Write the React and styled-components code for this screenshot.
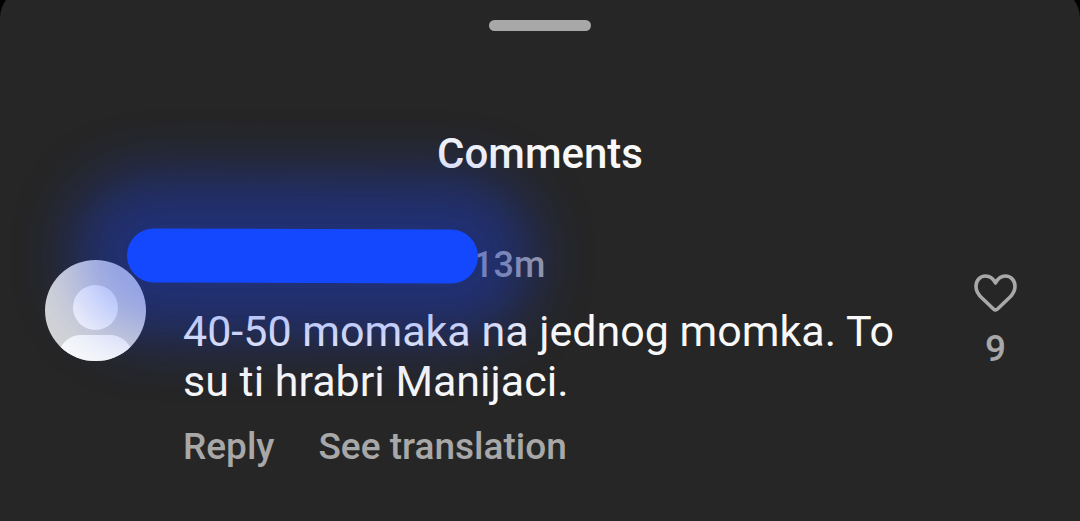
import React from "react";
import styled, { createGlobalStyle } from "styled-components";

const GlobalStyle = createGlobalStyle`
  * { box-sizing: border-box; }
  body {
    margin: 0;
    background: #000;
    font-family: Roboto, "Liberation Sans", sans-serif;
    overflow-x: hidden;
  }
  button {
    padding: 0;
    border: 0;
    background: none;
    color: inherit;
    font: inherit;
    cursor: pointer;
  }
`;

const Sheet = styled.main`
  display: flex;
  flex-direction: column;
  min-height: calc(100vh + 12px);
  margin-top: -12px;
  padding-top: 32px;
  border-radius: 30px 30px 0 0;
  background: #262626;
  color: #f8f8f8;
`;

const Handle = styled.div`
  align-self: center;
  width: 102px;
  height: 11px;
  border-radius: 6px;
  background: #a8a8a8;
`;

const Title = styled.h1`
  margin: 98px 0 0;
  font-size: 42px;
  line-height: 50px;
  font-weight: 500;
  text-align: center;
`;

const Comment = styled.article`
  display: flex;
  align-items: flex-start;
  padding: 63px 60px 0 45px;
`;

const Avatar = styled.svg`
  flex: none;
  width: 101px;
  height: 101px;
  margin: 18px 37px 0 0;
`;

const Content = styled.div`
  flex: 1;
  min-width: 0;
  padding-right: 60px;
`;

const Meta = styled.header`
  display: flex;
  height: 46px;
  line-height: 46px;
  font-size: 36px;
  font-weight: 500;
  color: #a0a0a0;
`;

const Username = styled.span`
  position: relative;
  width: 290px;
`;

const Redaction = styled.span`
  position: absolute;
  z-index: 1;
  top: -13px;
  right: -5px;
  width: 351px;
  height: 54px;
  border-radius: 27px;
  background: #1448ff;
  box-shadow: 0 0 60px 54px rgba(24, 68, 255, 0.37);
  transform: rotate(0.2deg);
  pointer-events: none;
`;

const Message = styled.p`
  margin: 18px 0 0;
  font-size: 43px;
  line-height: 50px;
`;

const Actions = styled.div`
  display: flex;
  gap: 44px;
  margin-top: 18px;
  font-size: 37px;
  line-height: 46px;
  font-weight: 500;
  color: #a8a8a8;
`;

const Like = styled.button`
  display: flex;
  flex: none;
  flex-direction: column;
  align-items: center;
  gap: 13px;
  width: 49px;
  margin-top: 31px;
  && {
    color: #a8a8a8;
    font-size: 37px;
    line-height: 46px;
    font-weight: 500;
  }
`;

const Heart = styled.svg`
  width: 45px;
  height: 40px;
`;

export default function App() {
  return (
    <>
      <GlobalStyle />
      <Sheet>
        <Handle />
        <Title>Comments</Title>
        <Comment>
          <Avatar viewBox="0 0 101 101" aria-hidden="true">
            <clipPath id="avatar-clip">
              <circle cx="50.5" cy="50.5" r="50.5" />
            </clipPath>
            <g clipPath="url(#avatar-clip)">
              <rect width="101" height="101" fill="#d6d6d6" />
              <circle cx="50.5" cy="47.5" r="22.5" fill="#fafafa" />
              <path d="M14 91C18 81 26 75 36 75H65C75 75 83 81 87 91V101H14Z" fill="#fafafa" />
            </g>
          </Avatar>
          <Content>
            <Meta>
              <Username>
                <Redaction />
              </Username>
              <time>13m</time>
            </Meta>
            <Message>40-50 momaka na jednog momka. To su ti hrabri Manijaci.</Message>
            <Actions>
              <button type="button">Reply</button>
              <button type="button">See translation</button>
            </Actions>
          </Content>
          <Like type="button" aria-label="Like, 9 likes">
            <Heart viewBox="0 0 45 40" fill="none" aria-hidden="true">
              <path
                d="M22.5 10C20 5 16.5 3 12.5 3C7 3 3 7.500 3 13.500C3 18.500 5.500 22 9.500 25.500L20.500 36C21.800 37.200 23.200 37.200 24.500 36L35.500 25.500C39.500 22 42 18.500 42 13.500C42 7.500 38 3 32.500 3C28.500 3 25 5 22.500 10Z"
                stroke="currentColor"
                strokeWidth="3.6"
                strokeLinejoin="round"
              />
            </Heart>
            <span>9</span>
          </Like>
        </Comment>
      </Sheet>
    </>
  );
}
